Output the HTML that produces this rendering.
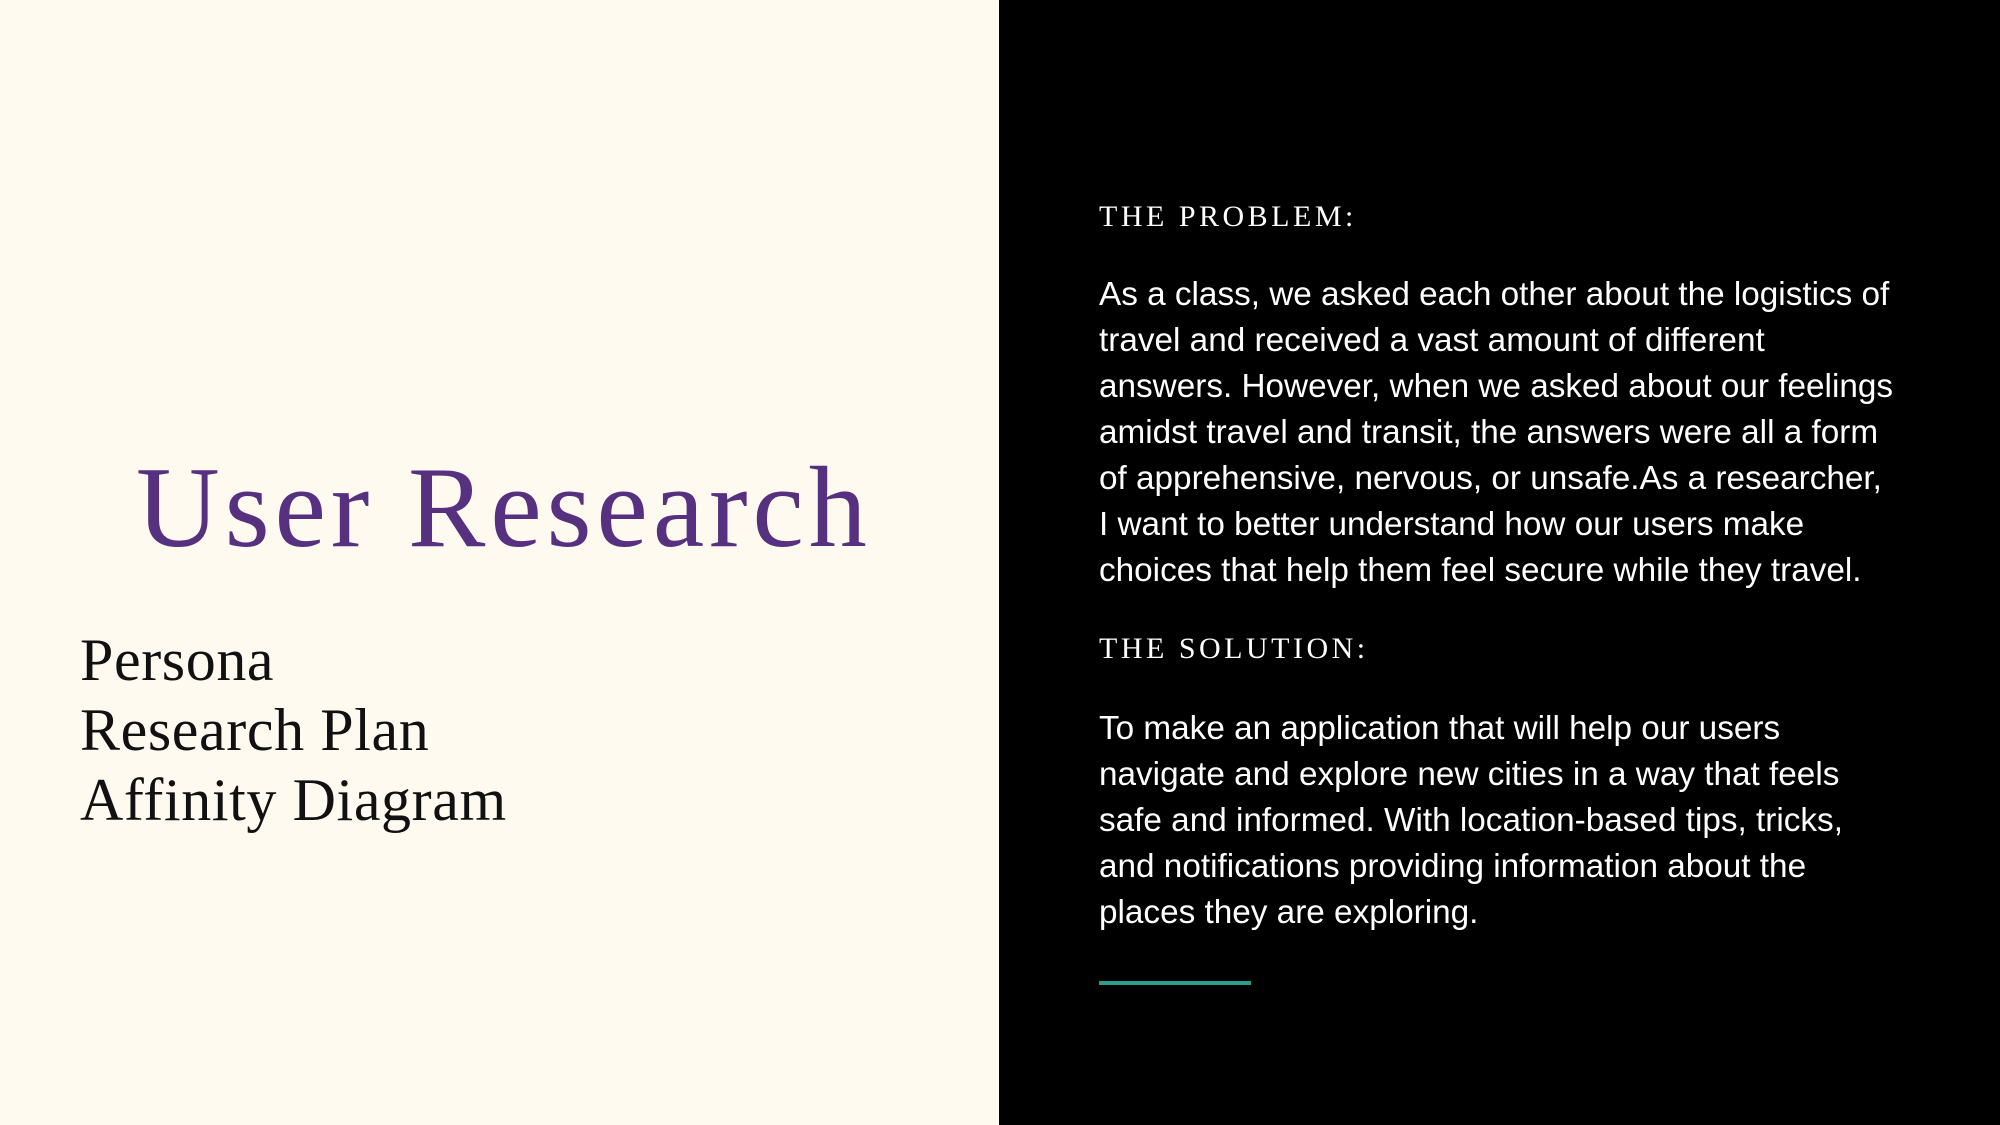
<!DOCTYPE html>
<html><head><meta charset="utf-8"><style>
*{margin:0;padding:0;box-sizing:border-box}
body{width:2000px;height:1125px;position:relative;overflow:hidden;background:#000;}
.left{position:absolute;left:0;top:0;width:999px;height:1125px;background:#fefaf0;}
.t{position:absolute;font-family:"Liberation Serif",serif;white-space:nowrap;line-height:1;}
.b{position:absolute;left:1099px;font-family:"Liberation Sans",sans-serif;color:#fff;font-size:33.3px;line-height:46px;white-space:nowrap;}
</style></head><body>
<div class="left"></div>
<div class="t" style="left:136px;top:450px;font-size:116px;letter-spacing:4.8px;color:#57317f;">User Research</div>
<div class="t" style="left:80px;top:625px;font-size:60px;letter-spacing:0.6px;color:#111;line-height:70px;">Persona<br>Research Plan<br>Affinity Diagram</div>
<div class="t" style="left:1099px;top:202px;font-size:30px;letter-spacing:3.5px;color:#fff;">THE PROBLEM:</div>
<div class="b" style="top:272px;">As a class, we asked each other about the logistics of<br>travel and received a vast amount of different<br>answers. However, when we asked about our feelings<br>amidst travel and transit, the answers were all a form<br>of apprehensive, nervous, or unsafe.As a researcher,<br>I want to better understand how our users make<br>choices that help them feel secure while they travel.</div>
<div class="t" style="left:1099px;top:634px;font-size:30px;letter-spacing:3.5px;color:#fff;">THE SOLUTION:</div>
<div class="b" style="top:706px;">To make an application that will help our users<br>navigate and explore new cities in a way that feels<br>safe and informed. With location-based tips, tricks,<br>and notifications providing information about the<br>places they are exploring.</div>
<div style="position:absolute;left:1099px;top:981px;width:152px;height:4px;background:#2a9d8f;"></div>
</body></html>
